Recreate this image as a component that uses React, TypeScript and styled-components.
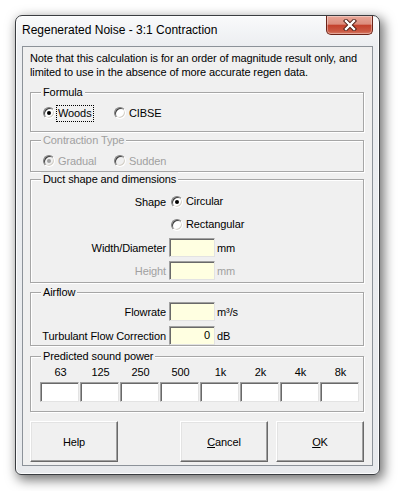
import React from "react";
import styled, { createGlobalStyle } from "styled-components";

const GlobalStyle = createGlobalStyle`
  html, body {
    margin: 0;
    padding: 0;
    background: #ffffff;
  }
  body {
    width: 398px;
    height: 491px;
    overflow: hidden;
    font-family: "Liberation Sans", Arial, sans-serif;
    font-size: 11px;
    letter-spacing: -0.1px;
    color: #000;
  }
`;

const Page = styled.div`
  padding: 15px 0 0 15px;
`;

const Window = styled.div`
  box-sizing: border-box;
  width: 365px;
  height: 460px;
  border: 1px solid #3a3d41;
  border-radius: 7px 7px 6px 6px;
  background: linear-gradient(180deg, #f9fafb 0%, #eceef1 30px, #e8eaed 100%);
  box-shadow: inset 0 0 0 1px rgba(255, 255, 255, 0.85), 3px 4px 12px 1px rgba(0, 0, 0, 0.55);
  padding: 0 6px 8px 6px;
  display: flex;
  flex-direction: column;
`;

const TitleBar = styled.div`
  height: 30px;
  display: flex;
  align-items: flex-start;
`;

const Title = styled.div`
  margin-top: 7px;
  font-size: 12px;
  line-height: 15px;
  letter-spacing: 0;
  white-space: nowrap;
`;

const CloseButton = styled.div`
  margin-left: auto;
  box-sizing: border-box;
  width: 47px;
  height: 19px;
  border: 1px solid #6b2318;
  border-top: none;
  border-radius: 0 0 5px 5px;
  background: linear-gradient(180deg, #e9a798 0%, #dc8d7d 45%, #c4422d 52%, #cb5a44 85%, #d9806b 100%);
  box-shadow: inset 0 0 0 1px rgba(255, 255, 255, 0.35);
  display: flex;
  align-items: center;
  justify-content: center;
`;

const Client = styled.div`
  flex: 1;
  box-sizing: border-box;
  border: 1px solid #8c9299;
  background: #f0f0f0;
  padding: 4px 8px 0 7px;
  display: flex;
  flex-direction: column;
`;

const Note = styled.div`
  line-height: 14px;
  white-space: nowrap;
`;

const Group = styled.div<{ $height: number; $top: number; $pad: string }>`
  position: relative;
  box-sizing: border-box;
  height: ${p => p.$height}px;
  margin-top: ${p => p.$top}px;
  padding: ${p => p.$pad};
  border: 1px solid #a6a6a6;
  box-shadow: inset 1px 1px 0 #ffffff, 1px 1px 0 #ffffff;
`;

const Legend = styled.span<{ $disabled?: boolean }>`
  position: absolute;
  top: -8px;
  left: 10px;
  padding: 0 2px;
  line-height: 14px;
  background: #f0f0f0;
  color: ${p => (p.$disabled ? "#a0a0a0" : "#000")};
`;

const OptionRow = styled.div`
  display: flex;
  align-items: center;
  height: 16px;
`;

const Option = styled.div<{ $width?: number; $disabled?: boolean }>`
  display: flex;
  align-items: center;
  width: ${p => (p.$width ? `${p.$width}px` : "auto")};
  color: ${p => (p.$disabled ? "#a0a0a0" : "#000")};
`;

const Radio = styled.span<{ $checked?: boolean; $disabled?: boolean }>`
  position: relative;
  box-sizing: border-box;
  width: 12px;
  height: 12px;
  flex: none;
  border-radius: 50%;
  border: 1px solid;
  border-color: #808080 #ffffff #ffffff #808080;
  box-shadow: inset 1px 1px 0 #404040, inset -1px -1px 0 #d4d0c8;
  background: ${p => (p.$disabled ? "#f0f0f0" : "#ffffff")};

  &::after {
    content: "";
    display: ${p => (p.$checked ? "block" : "none")};
    position: absolute;
    left: 3px;
    top: 3px;
    width: 4px;
    height: 4px;
    border-radius: 50%;
    background: ${p => (p.$disabled ? "#a0a0a0" : "#000")};
  }
`;

const OptionLabel = styled.span<{ $focused?: boolean }>`
  margin-left: 1px;
  padding: 0 1px;
  line-height: 15px;
  border: 1px dotted ${p => (p.$focused ? "#000" : "transparent")};
  white-space: nowrap;
`;

const FormRow = styled.div<{ $top: number; $height: number }>`
  display: grid;
  grid-template-columns: 135px auto;
  column-gap: 3px;
  align-items: center;
  height: ${p => p.$height}px;
  margin-top: ${p => p.$top}px;
`;

const RowLabel = styled.span<{ $disabled?: boolean }>`
  text-align: right;
  white-space: nowrap;
  color: ${p => (p.$disabled ? "#a0a0a0" : "#000")};
`;

const Control = styled.div<{ $indent?: number }>`
  display: flex;
  align-items: center;
  padding-left: ${p => p.$indent || 0}px;
`;

const TextBox = styled.div<{ $width?: number; $height?: number; $bg?: string }>`
  box-sizing: border-box;
  width: ${p => p.$width || 46}px;
  height: ${p => p.$height || 19}px;
  border: 1px solid;
  border-color: #a0a0a0 #e3e3e3 #e3e3e3 #a0a0a0;
  box-shadow: inset 1px 1px 0 #696969;
  background: ${p => p.$bg || "#ffffe1"};
  text-align: right;
  padding-right: 4px;
  line-height: 16px;
`;

const Unit = styled.span<{ $disabled?: boolean }>`
  margin-left: 2px;
  color: ${p => (p.$disabled ? "#a0a0a0" : "#000")};
`;

const BandGrid = styled.div<{ $top: number }>`
  display: grid;
  grid-template-columns: repeat(8, 39px);
  column-gap: 1px;
  margin-top: ${p => p.$top}px;
`;

const BandHead = styled.span`
  text-align: center;
  line-height: 14px;
  padding-left: 2px;
`;

const ButtonRow = styled.div`
  display: flex;
  gap: 8px;
  margin-top: 9px;
`;

const Button = styled.div<{ $push?: boolean }>`
  box-sizing: border-box;
  width: 88px;
  height: 41px;
  margin-left: ${p => (p.$push ? "auto" : "0")};
  border: 1px solid;
  border-color: #ffffff #696969 #696969 #ffffff;
  box-shadow: inset -1px -1px 0 #a0a0a0, inset 1px 1px 0 #e3e3e3;
  background: #f0f0f0;
  display: flex;
  align-items: center;
  justify-content: center;
`;

const CloseIcon = () => (
  <svg width="14" height="12" viewBox="0 0 14 12">
    <path d="M3 2 L11 10 M11 2 L3 10" stroke="#4a1a12" strokeWidth="4.2" strokeLinecap="square" />
    <path d="M3 2 L11 10 M11 2 L3 10" stroke="#ffffff" strokeWidth="2.4" strokeLinecap="square" />
  </svg>
);

const bands = ["63", "125", "250", "500", "1k", "2k", "4k", "8k"];

export default function App() {
  return (
    <>
      <GlobalStyle />
      <Page>
        <Window>
          <TitleBar>
            <Title>Regenerated Noise - 3:1 Contraction</Title>
            <CloseButton>
              <CloseIcon />
            </CloseButton>
          </TitleBar>
          <Client>
            <Note>
              Note that this calculation is for an order of magnitude result only, and
              <br />
              limited to use in the absence of more accurate regen data.
            </Note>

            <Group $height={40} $top={13} $pad="12px 0 0 12px">
              <Legend>Formula</Legend>
              <OptionRow>
                <Option $width={71}>
                  <Radio $checked />
                  <OptionLabel $focused>Woods</OptionLabel>
                </Option>
                <Option>
                  <Radio />
                  <OptionLabel>CIBSE</OptionLabel>
                </Option>
              </OptionRow>
            </Group>

            <Group $height={32} $top={8} $pad="12px 0 0 12px">
              <Legend $disabled>Contraction Type</Legend>
              <OptionRow>
                <Option $width={71} $disabled>
                  <Radio $checked $disabled />
                  <OptionLabel>Gradual</OptionLabel>
                </Option>
                <Option $disabled>
                  <Radio $disabled />
                  <OptionLabel>Sudden</OptionLabel>
                </Option>
              </OptionRow>
            </Group>

            <Group $height={104} $top={7} $pad="0">
              <Legend>Duct shape and dimensions</Legend>
              <FormRow $top={13} $height={16}>
                <RowLabel>Shape</RowLabel>
                <Control $indent={2}>
                  <Radio $checked />
                  <OptionLabel>Circular</OptionLabel>
                </Control>
              </FormRow>
              <FormRow $top={7} $height={16}>
                <span />
                <Control $indent={2}>
                  <Radio />
                  <OptionLabel>Rectangular</OptionLabel>
                </Control>
              </FormRow>
              <FormRow $top={6} $height={19}>
                <RowLabel>Width/Diameter</RowLabel>
                <Control>
                  <TextBox />
                  <Unit>mm</Unit>
                </Control>
              </FormRow>
              <FormRow $top={4} $height={19}>
                <RowLabel $disabled>Height</RowLabel>
                <Control>
                  <TextBox />
                  <Unit $disabled>mm</Unit>
                </Control>
              </FormRow>
            </Group>

            <Group $height={54} $top={9} $pad="0">
              <Legend>Airflow</Legend>
              <FormRow $top={9} $height={19}>
                <RowLabel>Flowrate</RowLabel>
                <Control>
                  <TextBox />
                  <Unit>m³/s</Unit>
                </Control>
              </FormRow>
              <FormRow $top={5} $height={19}>
                <RowLabel>Turbulant Flow Correction</RowLabel>
                <Control>
                  <TextBox>0</TextBox>
                  <Unit>dB</Unit>
                </Control>
              </FormRow>
            </Group>

            <Group $height={56} $top={10} $pad="0 0 0 9px">
              <Legend>Predicted sound power</Legend>
              <BandGrid $top={8}>
                {bands.map(b => (
                  <BandHead key={b}>{b}</BandHead>
                ))}
              </BandGrid>
              <BandGrid $top={3}>
                {bands.map(b => (
                  <TextBox key={b} $width={39} $height={20} $bg="#ffffff" />
                ))}
              </BandGrid>
            </Group>

            <ButtonRow>
              <Button>Help</Button>
              <Button $push>
                <span>
                  <u>C</u>ancel
                </span>
              </Button>
              <Button>
                <span>
                  <u>O</u>K
                </span>
              </Button>
            </ButtonRow>
          </Client>
        </Window>
      </Page>
    </>
  );
}
